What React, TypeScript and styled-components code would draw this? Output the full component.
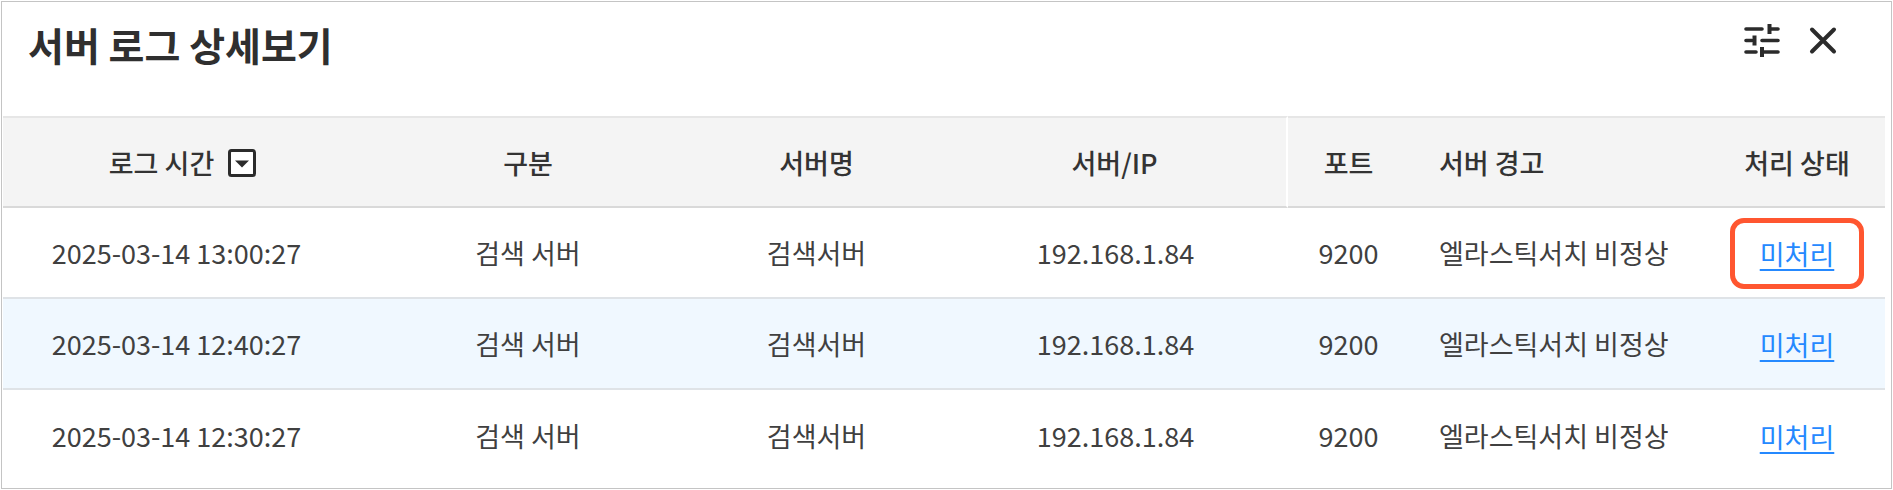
import React from "react";
import styled, { createGlobalStyle } from "styled-components";

const GlobalStyle = createGlobalStyle`
  * { box-sizing: border-box; }
  body {
    margin: 0;
    background: #fff;
    color: #404040;
    font-family: "Noto Sans CJK KR", "Noto Sans", sans-serif;
    font-size: 27px;
    line-height: 40px;
  }
`;

const Panel = styled.section`
  margin: 1px;
  padding: 0 6px 7px 1px;
  border: 1px solid #c4c4c4;
  background: #fff;
`;

const PanelHeader = styled.header`
  display: flex;
  justify-content: space-between;
  align-items: flex-start;
  height: 114px;
  padding: 14px 44px 0 25px;
`;

const Title = styled.h1`
  margin: 0;
  font-size: 39px;
  font-weight: 700;
  line-height: 56px;
  color: #2f2f2f;
`;

const Actions = styled.div`
  display: flex;
  gap: 25px;
  padding-top: 6px;
`;

const IconButton = styled.button`
  display: flex;
  padding: 0;
  border: 0;
  background: none;
  color: #2b2b2b;
  cursor: pointer;
`;

const LogTable = styled.table`
  width: 100%;
  table-layout: fixed;
  border-collapse: separate;
  border-spacing: 0;
`;

const Col = styled.col<{ $width: number }>`
  width: ${({ $width }) => $width}px;
`;

type CellProps = { $align?: "left" | "center"; $inset?: string };

const HeadCell = styled.th<CellProps & { $divider?: boolean }>`
  height: 92px;
  padding: ${({ $inset }) => $inset ?? "2px 0 0"};
  border-top: 2px solid #e6e6e6;
  border-bottom: 2px solid #d9d9d9;
  background: #f4f4f4;
  color: #333;
  font-weight: 500;
  text-align: ${({ $align }) => $align ?? "center"};
  border-right: ${({ $divider }) => ($divider ? "2px solid #fff" : "0")};
`;

const SortLabel = styled.span`
  display: inline-flex;
  align-items: center;
  gap: 14px;
`;

const Row = styled.tr<{ $active?: boolean }>`
  background: ${({ $active }) => ($active ? "#f0f8ff" : "#fff")};

  &:last-child td { border-bottom: 0; }
`;

const Cell = styled.td<CellProps>`
  height: 91px;
  padding: ${({ $inset }) => $inset ?? "1px 0 0"};
  border-bottom: 2px solid #dfe3e7;
  text-align: ${({ $align }) => $align ?? "center"};
  white-space: nowrap;
`;

const StatusBox = styled.span<{ $marked?: boolean }>`
  display: inline-block;
  padding: 11px 25px 10px;
  border: 5px solid ${({ $marked }) => ($marked ? "#ff5630" : "transparent")};
  border-radius: 14px;
`;

const StatusLink = styled.a`
  color: #2589ff;
  text-decoration: underline;
  text-decoration-thickness: 2px;
  text-underline-offset: 4px;
`;

const widths = [363, 324, 253, 345, 121, 300, 176];

const logs = [
  { time: "2025-03-14 13:00:27", marked: true },
  { time: "2025-03-14 12:40:27", active: true },
  { time: "2025-03-14 12:30:27" },
];

const FilterIcon = () => (
  <svg width="36" height="36" viewBox="0 0 36 36" fill="none" stroke="currentColor" strokeLinecap="round">
    <path d="M2 7H18M26 7H34M2 18.500H8M18 18.500H34M2 30H12M20 30H34" strokeWidth="3.600" />
    <path d="M25.500 4V10M10.500 15.500V21.500M18 27V33" strokeWidth="4" strokeLinecap="square" />
  </svg>
);

const CloseIcon = () => (
  <svg width="36" height="36" viewBox="0 0 36 36" fill="none" stroke="currentColor" strokeWidth="4" strokeLinecap="round">
    <path d="M7 7.500L29 29.500M29 7.500L7 29.500" />
  </svg>
);

const SortIcon = () => (
  <svg width="28" height="28" viewBox="0 0 28 28">
    <rect x="1.500" y="1.500" width="25" height="25" rx="2" fill="#fff" stroke="#2b2b2b" strokeWidth="3" />
    <path d="M7 11.500H21L14 18.500Z" fill="#2b2b2b" />
  </svg>
);

export default function App() {
  return (
    <>
      <GlobalStyle />
      <Panel aria-labelledby="log-title">
        <PanelHeader>
          <Title id="log-title">서버 로그 상세보기</Title>
          <Actions>
            <IconButton type="button" aria-label="필터"><FilterIcon /></IconButton>
            <IconButton type="button" aria-label="닫기"><CloseIcon /></IconButton>
          </Actions>
        </PanelHeader>
        <LogTable>
          <colgroup>
            {widths.map((w, i) => <Col key={i} $width={w} />)}
          </colgroup>
          <thead>
            <tr>
              <HeadCell scope="col" $inset="2px 4px 0 0">
                <SortLabel>로그 시간<SortIcon /></SortLabel>
              </HeadCell>
              <HeadCell scope="col">구분</HeadCell>
              <HeadCell scope="col">서버명</HeadCell>
              <HeadCell scope="col" $divider>서버/IP</HeadCell>
              <HeadCell scope="col">포트</HeadCell>
              <HeadCell scope="col" $align="left" $inset="2px 0 0 30px">서버 경고</HeadCell>
              <HeadCell scope="col">처리 상태</HeadCell>
            </tr>
          </thead>
          <tbody>
            {logs.map((log) => (
              <Row key={log.time} $active={log.active}>
                <Cell $inset="1px 16px 0 0">{log.time}</Cell>
                <Cell>검색 서버</Cell>
                <Cell>검색서버</Cell>
                <Cell>192.168.1.84</Cell>
                <Cell>9200</Cell>
                <Cell $align="left" $inset="1px 0 0 30px">엘라스틱서치 비정상</Cell>
                <Cell>
                  <StatusBox $marked={log.marked}><StatusLink href="#">미처리</StatusLink></StatusBox>
                </Cell>
              </Row>
            ))}
          </tbody>
        </LogTable>
      </Panel>
    </>
  );
}
